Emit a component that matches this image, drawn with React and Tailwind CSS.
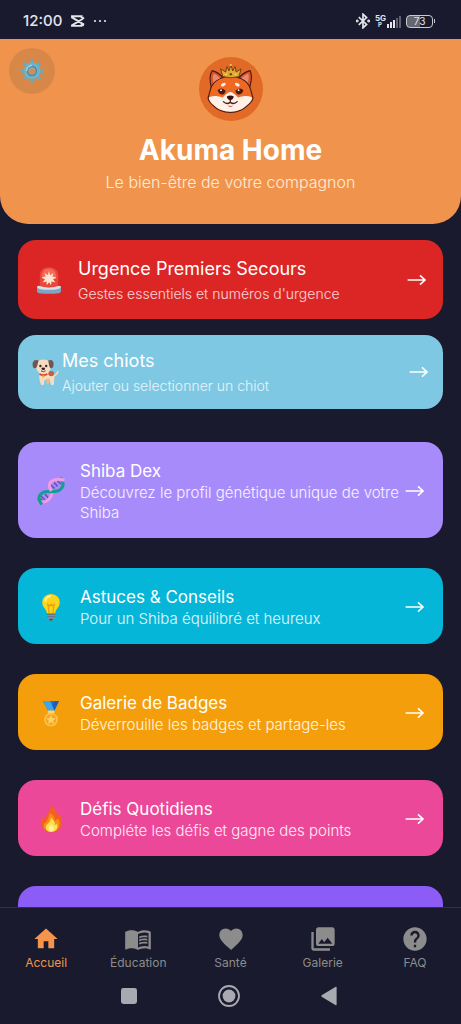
import React, { useState } from 'react';
import { MdHome, MdMenuBook, MdFavorite, MdPhotoLibrary, MdHelp } from 'react-icons/md';

function GearIcon() {
    const teeth = [0, 45, 90, 135, 180, 225, 270, 315];
    return (
        <svg viewBox="0 0 24 24" className="w-6 h-6" aria-hidden="true">
            {teeth.map((angle) => (
                <path key={angle} d="M10.2 5L10.6 0.6Q12 0 13.4 0.6L13.8 5Z" fill="#62adc4" transform={`rotate(${angle} 12 12)`} />
            ))}
            <circle cx="12" cy="12" r="6" fill="none" stroke="#6fb3c8" strokeWidth="4.4" />
            <circle cx="12" cy="12" r="4.4" fill="none" stroke="#4488b8" strokeWidth="1.5" />
            <path d="M6.6 12a5.6 5.6 0 0 1 5.4-5.6" fill="none" stroke="#a9d3dc" strokeWidth="1.3" />
            <circle cx="12" cy="12" r="3.4" fill="#a9a198" />
            <circle cx="12.2" cy="12.3" r="2.6" fill="#d98a4c" />
        </svg>
    );
}

function ShibaLogo() {
    return (
        <svg viewBox="0 0 64 64" className="w-16 h-16" role="img" aria-label="Akuma">
            <circle cx="32" cy="32" r="32" fill="#e06a26" />
            <g stroke="#4a1a14" strokeWidth="1.1" strokeLinejoin="round">
                <path d="M12.4 31C10.6 24 11 17 13.2 13.6C18 15 22 18 24.6 21.4Z" fill="#d9552a" />
                <path d="M50.6 31C52.6 24 52.8 17 51 13.6C46 15 42 18 39.4 21.4Z" fill="#d9552a" />
                <path d="M31.5 19.5C39 19.5 46 22 50 28.5C52 32 52.4 36 54 41C53.6 44 51 46.5 48.6 48.4C44 53 38 55.4 31.5 55.4C25 55.4 18.4 53 14 48.4C11.6 46.4 9.6 44 9 41C10.8 36 11 32 13 28.5C17 22 24 19.5 31.5 19.5Z" fill="#ee6a22" />
            </g>
            <path d="M14.4 25.5C13.6 21.5 13.8 18.5 14.8 16.8C18 18.2 19.6 19.6 21.2 21.6C18.4 22.6 16.2 24 14.4 25.5Z" fill="#e98a70" />
            <path d="M49 25.5C49.8 21.5 50 18.5 49.2 16.8C46 18.2 44 19.6 42.4 21.6C45.2 22.6 47.2 24 49 25.5Z" fill="#e98a70" />
            <path d="M10.8 40C14 38.6 18.6 38.8 23.4 40.6C26.4 38.4 28.6 35 31.3 35C34 35 36.6 38.4 39.4 40.6C44 38.8 49 38.6 52.4 40L53.2 41.2C52 44.4 50 46.4 48 48C43.6 52.6 37.6 54.7 31.5 54.7C25.4 54.7 19 52.6 14.6 48C12.4 46.2 10.6 44.2 9.8 41.2Z" fill="#fff1e8" />
            <ellipse cx="24.3" cy="27.6" rx="2.6" ry="1.5" transform="rotate(-28 24.3 27.6)" fill="#fff1e8" />
            <ellipse cx="38.3" cy="27.6" rx="2.6" ry="1.5" transform="rotate(28 38.3 27.6)" fill="#fff1e8" />
            <path d="M18.6 33.2Q22 29.6 26.6 33.8Q26 37.6 22.8 37.4Q19.8 37 18.6 33.2Z" fill="#4b1814" />
            <path d="M44.4 33.2Q41 29.6 36.4 33.8Q37 37.6 40.2 37.4Q43.2 37 44.4 33.2Z" fill="#4b1814" />
            <circle cx="22" cy="33.2" r="0.9" fill="#fff" />
            <circle cx="39.6" cy="33.2" r="0.9" fill="#fff" />
            <path d="M27.8 39.4Q31.3 37.8 34.8 39.4Q34.4 42.4 31.3 43.2Q28.2 42.4 27.8 39.4Z" fill="#35120f" />
            <path d="M31.3 43V45.4M24.4 44.6Q27.6 48 31.3 45.4Q35 48 38.2 44.6" fill="none" stroke="#4a1a14" strokeWidth="1.3" strokeLinecap="round" />
            <path d="M28.6 48.2Q31.3 49.6 34 48.2Q33.2 50 31.3 50Q29.4 50 28.6 48.2Z" fill="#c94f48" />
            <path d="M23.8 19.6L21.6 11.8L26.6 15L28 9.6L30 14L31.8 8L33.8 14L36 9.6L37.2 15L42 11.8L40 19.6Q32 22 23.8 19.6Z" fill="#e0ac36" stroke="#6b3a14" strokeWidth="0.9" strokeLinejoin="round" />
            <circle cx="31.8" cy="17.2" r="1.3" fill="#8a3a26" />
            <circle cx="27" cy="17.5" r="0.8" fill="#f9e27a" />
            <circle cx="36.6" cy="17.5" r="0.8" fill="#f9e27a" />
            <circle cx="31.8" cy="8" r="1.1" fill="#f5cf55" />
        </svg>
    );
}

function SirenIcon() {
    return (
        <svg viewBox="0 0 26 28" className="w-[26px] h-7" aria-hidden="true">
            <path d="M3.8 21V9.5Q4 1.4 13 1.2Q22 1.4 22.2 9.5V21Z" fill="#e8483c" />
            <path d="M6 9Q6.6 3 13 2.6Q19.4 3 20 9V13H6Z" fill="#f26a58" />
            <path d="M13 5L14.1 9.2L17.4 7L16.4 10.6L20.4 11.4L17 13.2L19.4 16.4L15.6 15.5L15 19.2L13 16.2L10.8 19.2L10.4 15.5L6.6 16.4L9 13.2L5.6 11.4L9.6 10.6L8.6 7L11.9 9.2Z" fill="#ffe3cf" />
            <path d="M1 21Q13 24.4 25 21V25.2Q24.8 27 22.6 27.2Q13 28.2 3.4 27.2Q1.2 27 1 25.2Z" fill="#7fa5c6" />
            <path d="M1 21.2Q1 20 2.6 19.8Q13 23.2 23.4 19.8Q25 20 25 21.2Q23.4 23.8 13 23.8Q2.6 23.8 1 21.2Z" fill="#d9dfe6" />
        </svg>
    );
}

function DogIcon() {
    return (
        <svg viewBox="0 0 27 28" className="w-[27px] h-7" aria-hidden="true">
            <path d="M21.4 17.8Q24.6 17.2 25.8 13.8" fill="none" stroke="#f6d5b8" strokeWidth="1.8" strokeLinecap="round" />
            <path d="M7.4 14H19.6Q22.8 15.6 22.4 19.4L21.8 26.4Q20.4 27.8 18.8 26.4L17.8 22H12.4L12 26.4Q10.4 27.8 8.8 26.4L7.2 20Z" fill="#f8dcc2" />
            <path d="M14 20.5H18L17 25.6Q15.6 26.6 14.6 25.4Z" fill="#e7bd98" />
            <ellipse cx="19.2" cy="15.6" rx="2.9" ry="2.6" fill="#c65f3e" />
            <path d="M5.2 3.6Q11.2-0.4 17.6 3.6Q19.4 8 18 12Q15.8 16.2 11.4 16.2Q7 16.2 5 12Q3.6 8 5.2 3.6Z" fill="#f8dcc2" />
            <path d="M6.6 2.6Q2.4 0.8 0.8 4.4Q0 9.2 2.2 10.2Q4.4 10.6 5.2 8Z" fill="#72564c" />
            <path d="M16.2 2.6Q20.4 0.8 21.4 4.4Q22 9.2 19.8 10.2Q17.8 10.4 17.2 8Z" fill="#72564c" />
            <circle cx="8.4" cy="8" r="1.2" fill="#3a2a28" />
            <circle cx="14.2" cy="8" r="1.2" fill="#3a2a28" />
            <ellipse cx="11.3" cy="10.8" rx="1.8" ry="1.3" fill="#33211f" />
            <path d="M9 12.8Q11.3 14.6 13.6 12.8" fill="none" stroke="#5b3a34" strokeWidth="0.9" />
            <path d="M7.4 16Q11.4 18.4 15.4 16" fill="none" stroke="#d84636" strokeWidth="1.7" />
            <circle cx="11.4" cy="18.4" r="1.2" fill="#e9b53e" />
        </svg>
    );
}

function DnaIcon() {
    return (
        <svg viewBox="0 0 28 28" className="w-7 h-7" aria-hidden="true">
            <path d="M4 19L8 23M3.4 21.6L6 24.6M8 17L11.4 21M13.6 7.6L17.6 11.6M17 5.4L20.6 9.4M20.6 4L24 7.2" stroke="#6257ae" strokeWidth="1.6" />
            <path d="M0.8 24.6Q9.8 26.8 14 19.4Q15.2 16.4 14.6 14" fill="none" stroke="#ee9ae4" strokeWidth="3.1" />
            <path d="M5 27.4Q0.4 23.4 2.6 18.6Q5.6 13.6 13.4 14.6Q23.6 15.4 25.8 9Q27 4.6 23.4 0.8" fill="none" stroke="#169c91" strokeWidth="3.1" />
            <path d="M14.4 14Q11 9.4 13.4 5.4Q18 0.4 27.4 3.2" fill="none" stroke="#ee9ae4" strokeWidth="3.1" />
        </svg>
    );
}

function BulbIcon() {
    return (
        <svg viewBox="0 0 20 28" className="w-5 h-7" aria-hidden="true">
            <path d="M10 1Q18.4 1.6 18.8 9.4Q18.6 13 16.2 15.6Q14.4 18 14 20.6H6Q5.6 18 3.8 15.6Q1.4 13 1.2 9.4Q1.6 1.6 10 1Z" fill="#fdd41a" />
            <path d="M4.4 8Q5.2 3.8 9.4 3.2" fill="none" stroke="#fff29a" strokeWidth="1.8" strokeLinecap="round" />
            <path d="M8.2 20L6.8 11.4L8.8 13L10 11.2L11.2 13L13.2 11.4L11.8 20" fill="none" stroke="#e39a10" strokeWidth="1.1" />
            <path d="M6 20H14V24.4Q12.6 25.8 12 27Q10 28 8 27Q7.4 25.8 6 24.4Z" fill="#8399a5" />
            <path d="M6 21.6H14M6 23.8H14" stroke="#536a78" strokeWidth="0.9" />
            <path d="M8 25.8H12L11.4 27.4H8.6Z" fill="#3e5360" />
        </svg>
    );
}

function MedalIcon() {
    return (
        <svg viewBox="0 0 18 27" className="w-[18px] h-[27px]" aria-hidden="true">
            <path d="M1 1H17L12.4 10.6H6Z" fill="#1e78d0" />
            <path d="M1 1H8L13 10.6H6Z" fill="#3ea5ee" />
            <path d="M10 5L12.6 1H17L12.4 10.6Z" fill="#1763bd" />
            <rect x="5.6" y="10.6" width="7" height="2.6" rx="1.3" fill="#ffd56b" />
            <circle cx="9" cy="19.6" r="6.9" fill="#ffc247" />
            <circle cx="9" cy="19.6" r="5.2" fill="#f2a51e" />
            <path d="M9 14.8L10.4 18L13.8 18.4L11.2 20.7L12 24L9 22.3L6 24L6.8 20.7L4.2 18.4L7.6 18Z" fill="#ffce66" />
        </svg>
    );
}

function FireIcon() {
    return (
        <svg viewBox="0 0 23 28" className="w-[23px] h-7" aria-hidden="true">
            <path d="M10.6 0.6Q17.6 4.4 17 12Q18.4 10.8 18.6 8.6Q22.6 13.4 22 18.4Q20.6 27 11.4 27.4Q2 27 1 18.6Q0.8 14.6 3.6 11.4Q4 14 5.8 15Q5.4 9.8 8.8 7.2Q11.2 4.6 10.6 0.6Z" fill="#f4601e" />
            <path d="M9.8 8Q15 10.6 14.8 16L18.2 13.6Q21.6 20 17.4 24.6Q14.6 27.2 11.4 27.2Q6 27 3.8 22.6Q2.8 18.6 5.8 17.6Q9 13 9.8 8Z" fill="#f98c1c" />
            <path d="M11 12.6Q15.4 16.8 15 20Q16.6 19.6 16.8 18.2Q18.4 22.4 16 25Q13.8 27 11.4 27Q7.4 27 6 23.8Q5 20.4 8.4 18.2Q10.8 16 11 12.6Z" fill="#fde34b" />
            <path d="M11.4 19.6Q14.4 22.6 13.6 25Q11.6 27 9.2 25.2Q8 22.4 11.4 19.6Z" fill="#fff3a0" />
        </svg>
    );
}

function Arrow() {
    return (
        <svg viewBox="0 0 20 14" className="w-5 h-[14px] shrink-0" fill="none" stroke="currentColor" strokeWidth="1.6" aria-hidden="true">
            <path d="M0.6 7H17.6M13 2.4L18 7L13 11.6" />
        </svg>
    );
}

const features = [
    { title: 'Shiba Dex', text: 'Découvrez le profil génétique unique de votre Shiba', icon: DnaIcon, color: 'bg-[#a78bfa]' },
    { title: 'Astuces & Conseils', text: 'Pour un Shiba équilibré et heureux', icon: BulbIcon, color: 'bg-[#06b6d8]' },
    { title: 'Galerie de Badges', text: 'Déverrouille les badges et partage-les', icon: MedalIcon, color: 'bg-[#f59e0b]' },
    { title: 'Défis Quotidiens', text: 'Compléte les défis et gagne des points', icon: FireIcon, color: 'bg-[#ec4899]' },
];

const tabs = [
    { label: 'Accueil', icon: MdHome },
    { label: 'Éducation', icon: MdMenuBook },
    { label: 'Santé', icon: MdFavorite },
    { label: 'Galerie', icon: MdPhotoLibrary },
    { label: 'FAQ', icon: MdHelp },
];

function FeatureCard({ title, text, icon: Icon, color }) {
    return (
        <button className={`flex w-full items-center rounded-[18px] pt-[17px] pb-[15px] pl-4 pr-[18px] text-left text-white ${color}`}>
            <span className="flex w-[34px] shrink-0 justify-center"><Icon /></span>
            <span className="ml-3 flex-1">
                <span className="block text-[17px] leading-6">{title}</span>
                <span className="block text-[15px] leading-5 font-light text-white/90">{text}</span>
            </span>
            <Arrow />
        </button>
    );
}

function StatusBar() {
    return (
        <div className="flex h-[39px] shrink-0 items-center justify-between pl-[23px] pr-[26px] pt-[3px] text-[#e4e4ea]">
            <div className="flex items-center gap-2">
                <span className="text-[15px] leading-5 font-medium">12:00</span>
                <svg viewBox="0 0 15 12" className="w-[15px] h-3" fill="none" stroke="currentColor" strokeWidth="1.9" aria-hidden="true">
                    <path d="M14 2.6L12 4.2L2 10.4V10.9H11.6V9.4L14 10.4M14 9.6L2 2.4V1.2H11.6V3" />
                </svg>
                <svg viewBox="0 0 14 4" className="w-[14px] h-1" fill="currentColor" aria-hidden="true">
                    <circle cx="2" cy="2" r="1.1" />
                    <circle cx="7" cy="2" r="1.1" />
                    <circle cx="12" cy="2" r="1.1" />
                </svg>
            </div>
            <div className="flex items-center gap-[5px]">
                <svg viewBox="0 0 14 16" className="w-[14px] h-4" fill="none" stroke="currentColor" strokeWidth="1.7" aria-hidden="true">
                    <path d="M2.8 4.2L10.6 11.4L7 14.8V1.2L10.6 4.6L2.8 11.8" />
                    <circle cx="1.2" cy="8" r="0.6" />
                    <circle cx="12.6" cy="8" r="0.6" />
                </svg>
                <div className="flex items-end">
                    <div className="flex w-3 flex-col">
                        <span className="text-[8px] leading-[8px] font-bold">5G</span>
                        <span className="pl-[3px] text-[6px] leading-[6px] font-bold">P</span>
                    </div>
                    <svg viewBox="0 0 14 12" className="w-[14px] h-3" fill="currentColor" aria-hidden="true">
                        <rect x="0" y="8" width="2" height="4" />
                        <rect x="3" y="6" width="2" height="6" />
                        <rect x="6" y="4" width="2" height="8" />
                        <rect x="9" y="2" width="2" height="10" opacity="0.35" />
                        <rect x="12" y="0" width="2" height="12" opacity="0.35" />
                    </svg>
                </div>
                <div className="flex items-center gap-px">
                    <span className="flex h-[13px] w-[27px] items-center justify-center rounded-[4px] border border-[#c9c9d0] bg-linear-to-r from-[#66666f] from-50% to-transparent to-50% text-[10px] leading-[10px]">73</span>
                    <span className="h-1 w-px bg-[#c9c9d0]"></span>
                </div>
            </div>
        </div>
    );
}

export default function App() {
    const [activeTab, setActiveTab] = useState('Accueil');

    return (
        <div className="flex h-screen flex-col overflow-hidden bg-[#1a1a2e] font-['Inter',sans-serif]">
            <StatusBar />

            <main className="min-h-0 flex-1 overflow-hidden">
                {/* Header */}
                <header className="relative flex flex-col items-center rounded-b-[28px] bg-[#f0944d] pt-[18px] pb-[29px]">
                    <button aria-label="Paramètres" className="absolute left-[9px] top-[9px] flex h-[46px] w-[46px] items-center justify-center rounded-full bg-[#d78848]">
                        <GearIcon />
                    </button>
                    <ShibaLogo />
                    <h1 className="mt-3 text-[28px] leading-[34px] font-bold text-white">Akuma Home</h1>
                    <p className="mt-[2px] text-base leading-[26px] font-light text-[#fdebd8]">Le bien-être de votre compagnon</p>
                </header>

                <div className="px-[18px] pt-4">
                    <button className="flex w-full items-center rounded-[18px] bg-[#dc2626] py-[15px] pl-[18px] pr-4 text-left text-white">
                        <SirenIcon />
                        <span className="ml-4 flex-1">
                            <span className="block text-lg leading-7">Urgence Premiers Secours</span>
                            <span className="block text-sm leading-[21px] font-light text-white/80">Gestes essentiels et numéros d'urgence</span>
                        </span>
                        <Arrow />
                    </button>

                    <button className="mt-4 flex w-full items-center rounded-[18px] bg-[#7ec8e3] pt-3 pb-[13px] pl-[14px] pr-[14px] text-left text-white">
                        <DogIcon />
                        <span className="ml-[3px] flex-1">
                            <span className="block text-lg leading-7">Mes chiots</span>
                            <span className="block text-sm leading-[21px] font-light text-white/80">Ajouter ou selectionner un chiot</span>
                        </span>
                        <Arrow />
                    </button>

                    {/* Features */}
                    <div className="mt-[33px] flex flex-col gap-[30px]">
                        {features.map((feature) => (
                            <FeatureCard key={feature.title} {...feature} />
                        ))}
                        <div className="h-[76px] rounded-[18px] bg-[#8b5cf6]"></div>
                    </div>
                </div>
            </main>

            {/* Tabs */}
            <nav className="flex shrink-0 border-t border-[#30304a] pt-[17px]">
                {tabs.map(({ label, icon: Icon }) => (
                    <button
                        key={label}
                        onClick={() => setActiveTab(label)}
                        className={`flex flex-1 flex-col items-center ${activeTab === label ? 'text-[#f4944d]' : 'text-[#8c8c8c]'}`}
                    >
                        <Icon className="h-7 w-7" />
                        <span className="text-xs leading-5">{label}</span>
                    </button>
                ))}
            </nav>

            {/* System buttons */}
            <div className="flex h-[51px] shrink-0 items-center justify-center gap-[76px] pr-[3px] pb-[5px] text-[#a9a9b2]">
                <button aria-label="Applications récentes">
                    <svg viewBox="0 0 24 24" className="h-6 w-6" fill="currentColor"><rect x="4" y="4" width="16" height="16" rx="2.4" /></svg>
                </button>
                <button aria-label="Écran d'accueil">
                    <svg viewBox="0 0 24 24" className="h-6 w-6" fill="currentColor">
                        <circle cx="12" cy="12" r="10" fill="none" stroke="currentColor" strokeWidth="1.8" />
                        <circle cx="12" cy="12" r="6.4" />
                    </svg>
                </button>
                <button aria-label="Retour">
                    <svg viewBox="0 0 24 24" className="h-6 w-6" fill="currentColor"><path d="M4.6 11.3L18.8 2.8Q19.6 2.6 19.6 3.4V20.6Q19.6 21.4 18.8 21.2L4.6 12.7Q4 12 4.6 11.3Z" /></svg>
                </button>
            </div>
        </div>
    );
}
